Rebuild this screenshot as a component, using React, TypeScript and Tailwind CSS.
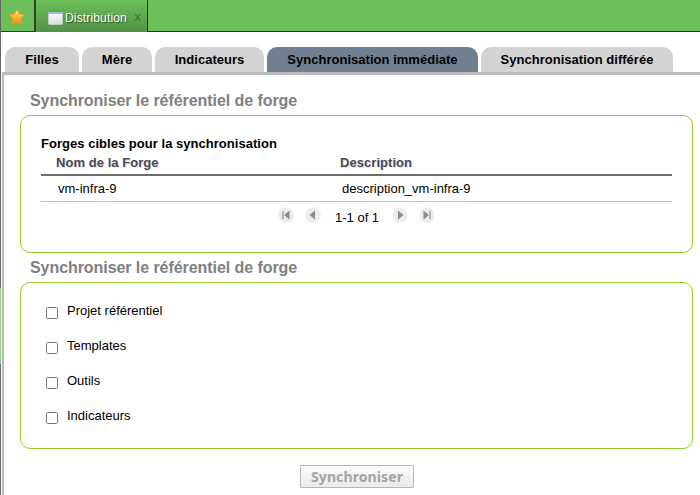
import React from "react";

const tabs = [
  { label: "Filles", width: "w-[74px]", active: false },
  { label: "Mère", width: "w-[70px]", active: false },
  { label: "Indicateurs", width: "w-[109px]", active: false },
  { label: "Synchronisation immédiate", width: "w-[211px]", active: true },
  { label: "Synchronisation différée", width: "w-[192px]", active: false },
];

const options = ["Projet référentiel", "Templates", "Outils", "Indicateurs"];

function Star() {
  return (
    <svg width="16" height="16" viewBox="0 0 16 16">
      <defs>
        <linearGradient id="star" x1="0" y1="0" x2="0" y2="1">
          <stop offset="0" stopColor="#fff3b0" />
          <stop offset="0.4" stopColor="#ffc13a" />
          <stop offset="1" stopColor="#fb8200" />
        </linearGradient>
      </defs>
      <path
        d="M8 0.6 L10.4 5.1 L15.6 5.8 L11.9 9.6 L12.9 15.2 L8 12.8 L3.1 15.2 L4.1 9.6 L0.4 5.8 L5.6 5.1 Z"
        fill="url(#star)"
        stroke="#f0982a"
        strokeWidth="0.8"
        strokeLinejoin="round"
      />
    </svg>
  );
}

function WindowIcon() {
  return (
    <svg width="16" height="14" viewBox="0 0 16 14">
      <defs>
        <linearGradient id="pane" x1="0" y1="0" x2="0" y2="1">
          <stop offset="0" stopColor="#ffffff" />
          <stop offset="1" stopColor="#d9dcd9" />
        </linearGradient>
      </defs>
      <rect x="0.5" y="0.5" width="14" height="13" rx="1" fill="url(#pane)" stroke="#c3cbc6" />
      <path d="M0 1.2 Q0 0 1.2 0 H13.8 Q15 0 15 1.2 V3 H0 Z" fill="#9dbfdd" />
      <path d="M0.5 0.5 H14.5" stroke="#5f8fb8" />
    </svg>
  );
}

function PagerIcon({ back, edge }: { back: boolean; edge: boolean }) {
  return (
    <svg width="16" height="16" viewBox="0 0 16 16">
      <circle cx="8" cy="8" r="7.7" fill="#ececec" />
      <g transform={back ? undefined : "translate(16 0) scale(-1 1)"}>
        <path d={edge ? "M11.5 3.5 V12.5 L6 8 Z" : "M10 3.5 V12.5 L4.5 8 Z"} fill="#8b8b8b" />
        {edge && <path d="M5 4 V12" stroke="#999" strokeWidth="1.3" />}
      </g>
    </svg>
  );
}

function Heading() {
  return (
    <h2 className="ml-[10px] text-[16px] leading-[18px] font-bold tracking-[-0.065px] text-[#808080]">
      Synchroniser le référentiel de forge
    </h2>
  );
}

export default function App() {
  return (
    <div className="flex h-[495px] w-[700px] overflow-hidden bg-white font-['Liberation_Sans',Arial,sans-serif] text-[13px] leading-[15px] text-black">
      <div className="flex w-px shrink-0 flex-col bg-[#666]">
        <div className="mt-[288px] h-[76px] bg-[#8fd77d]" />
      </div>
      <div className="flex min-w-0 grow flex-col">
        <header className="flex h-8 shrink-0 bg-[#6cc05a]">
          <div className="w-[33px] border-b border-[#32412f] pt-[9px] pl-[8px]">
            <Star />
          </div>
          <div className="flex w-[114px] border-r border-l-2 border-r-[#263423] border-l-[#343f32] bg-linear-to-b from-[#6cc05a] to-[#529247]">
            <div className="mt-[11px] ml-[12px] w-[17px]">
              <WindowIcon />
            </div>
            <span className="mt-[11px] w-[69px] text-[12px] leading-[15px] tracking-[0.16px] text-white [text-shadow:1px_1px_1px_#34502e]">
              Distribution
            </span>
            <span className="mt-[10px] font-['DejaVu_Sans',sans-serif] text-[12px] leading-[14px] font-normal text-[#3f7436]">x</span>
          </div>
          <div className="grow border-b border-[#263423]" />
        </header>
        <nav className="ml-px flex h-[43px] shrink-0 gap-[3px] border-b-3 border-[#bbb] pt-[15px] pl-[3px]">
          {tabs.map((t) => (
            <div
              key={t.label}
              className={`${t.width} shrink-0 rounded-t-[10px] pt-[5px] text-center font-bold tracking-[0.02px] whitespace-nowrap ${
                t.active ? "bg-[#708090]" : "bg-[#d3d3d3]"
              }`}
            >
              {t.label}
            </div>
          ))}
        </nav>
        <main className="ml-px flex grow flex-col border-l-2 border-[#bbb] pt-[17px] pr-[7px] pl-[16px]">
          <Heading />
          <section className="mt-[5px] h-[138px] shrink-0 rounded-[10px] border border-[#9acd32] px-[20px] pt-[20px]">
            <div className="font-bold tracking-[0.03px]">Forges cibles pour la synchronisation</div>
            <div className="mt-[4px] flex h-[21px] border-b-2 border-[#6b6b70] pl-[15px] font-bold tracking-[0.05px] text-[#4a4a50] [text-shadow:1px_1px_1px_#dcdcf5]">
              <div className="w-[284px]">Nom de la Forge</div>
              <div>Description</div>
            </div>
            <div className="flex h-[26px] border-b border-[#c4c4c4] pt-[5px] pl-[17px]">
              <div className="w-[284px]">vm-infra-9</div>
              <div>description_vm-infra-9</div>
            </div>
            <div className="flex pt-[5px] pl-[237px]">
              <PagerIcon back edge />
              <div className="ml-[11px]"><PagerIcon back edge={false} /></div>
              <span className="mt-[3px] ml-[14px] w-[45px] whitespace-nowrap">1-1 of 1</span>
              <div className="ml-[12px]"><PagerIcon back={false} edge={false} /></div>
              <div className="ml-[11px]"><PagerIcon back={false} edge /></div>
            </div>
          </section>
          <div className="mt-[6px]"><Heading /></div>
          <section className="mt-[5px] flex h-[167px] shrink-0 flex-col gap-[20px] rounded-[10px] border border-[#9acd32] pt-[20px] pl-[25px]">
            {options.map((o) => (
              <label key={o} className="flex h-[15px]">
                <input
                  type="checkbox"
                  className="mt-[4px] mr-[9px] size-[12px] shrink-0 appearance-none rounded-[1.5px] border border-[#77777d] bg-white"
                />
                {o}
              </label>
            ))}
          </section>
          <button className="mt-[16px] ml-[280px] h-[23px] w-[114px] rounded-[1px] border border-[#b8b8b8] bg-linear-to-b from-[#fbfbfb] to-[#eaeaea] font-['Noto_Sans',sans-serif] text-[14px] leading-[20px] font-bold tracking-[0.1px] text-[#a2a5a9]">
            Synchroniser
          </button>
        </main>
      </div>
    </div>
  );
}
